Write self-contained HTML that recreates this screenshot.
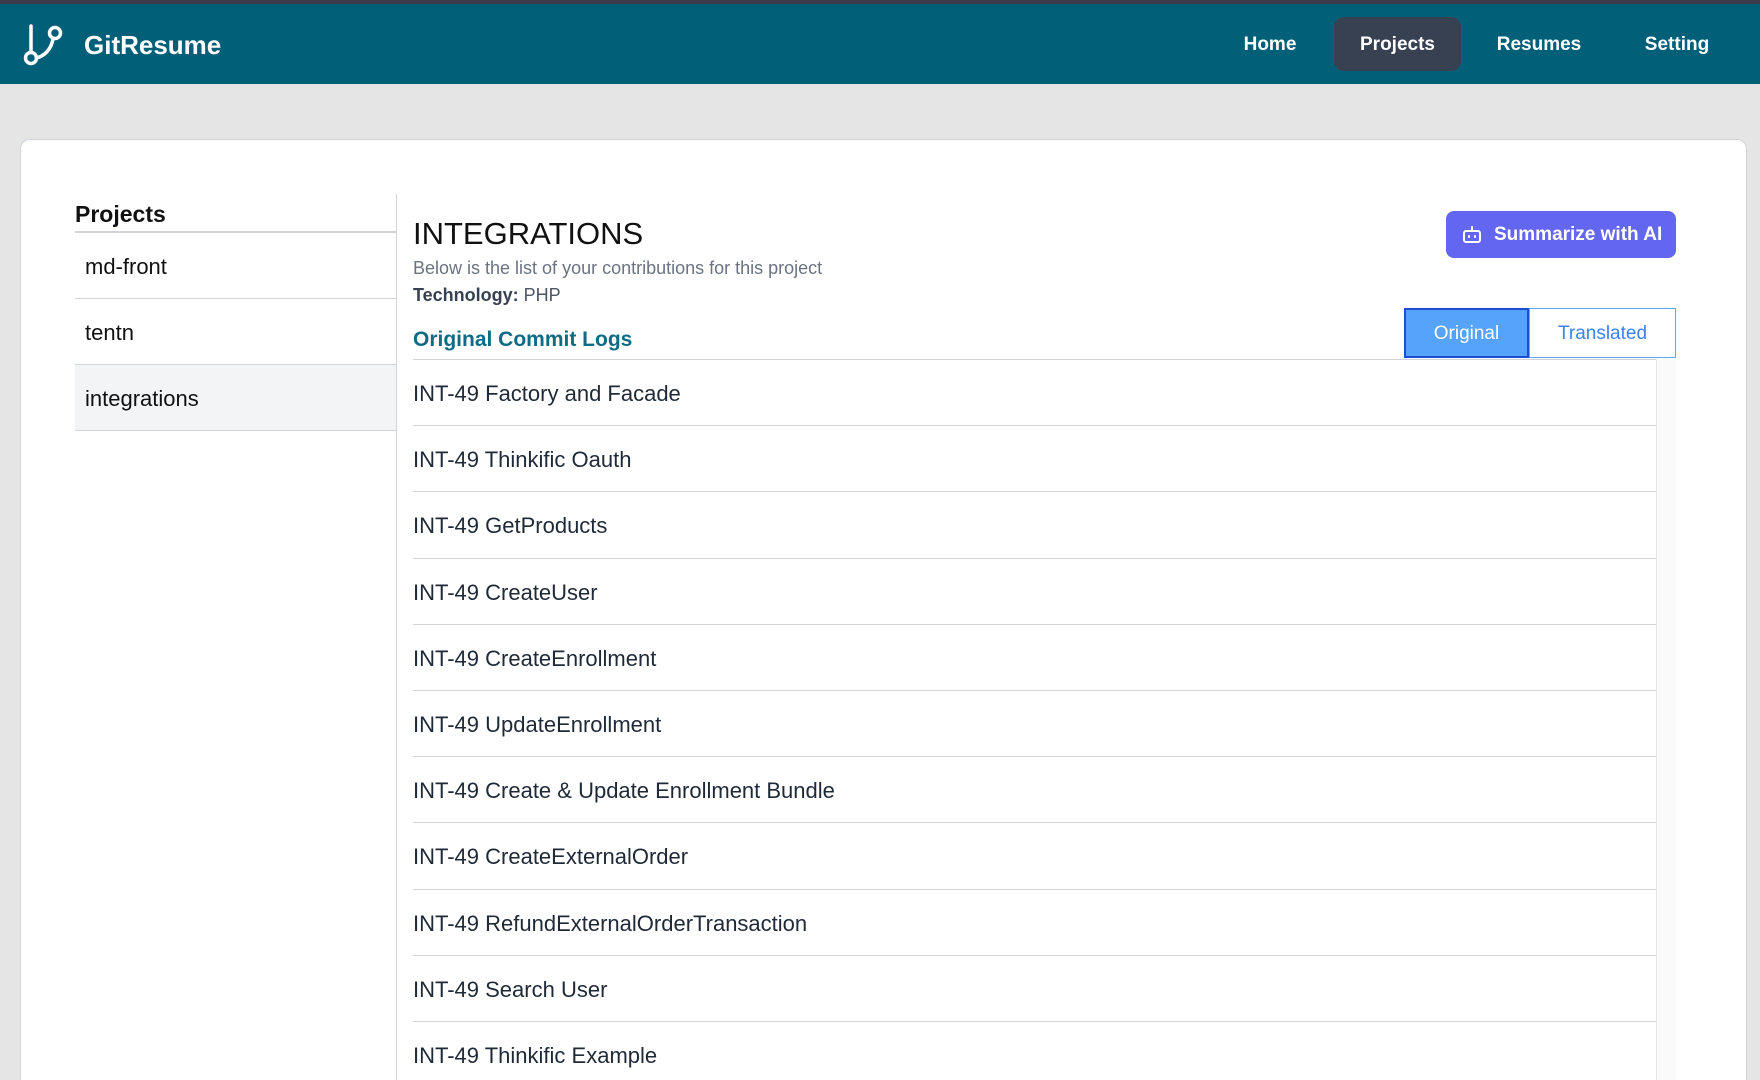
<!DOCTYPE html>
<html><head><meta charset="utf-8"><style>
*{box-sizing:border-box;margin:0;padding:0}
html,body{width:1760px;height:1080px;overflow:hidden}
body{background:#e5e5e5;font-family:"Liberation Sans",sans-serif;color:#1f2937}
#w{position:relative;width:1760px;height:1080px;overflow:hidden}
.a{position:absolute;white-space:nowrap}
.top{left:0;top:0;width:1760px;height:4px;background:#3d3a4b}
.hdr{left:0;top:4px;width:1760px;height:80px;background:#025f78}
.nav{color:#fff;font-size:19px;font-weight:bold;line-height:56px;top:17px;text-align:center}
.card{left:20px;top:139px;width:1727px;height:941px;background:#fff;border:1px solid #d1d5db;border-bottom:none;border-radius:10px 10px 0 0}
.side{left:75px;width:321px;height:66px;border-bottom:1px solid #d1d5db;font-size:22px;padding-left:10px;line-height:68px;color:#111}
.row{left:413px;width:1243px;height:66.2px;border-bottom:1px solid #d1d5db;font-size:22px;line-height:68px;color:#1f2937}
</style></head><body><div id="w">
<div class="a top"></div>
<div class="a hdr"></div>
<svg class="a" style="left:22px;top:24px" width="44" height="42" viewBox="0 0 44 42" fill="none" stroke="#fff" stroke-width="3.5" stroke-linecap="round">
<line x1="9" y1="2" x2="9" y2="28"/><circle cx="9" cy="34" r="5.5"/><circle cx="33" cy="9" r="5.5"/><path d="M31 15 C29 26 22 32 14.5 34"/></svg>
<div class="a" style="left:84px;top:28px;font-size:26px;font-weight:bold;color:#fff;line-height:34px">GitResume</div>
<div class="a nav" style="left:1230px;width:80px">Home</div>
<div class="a nav" style="left:1334px;width:127px;height:54px;background:#374151;border-radius:10px">Projects</div>
<div class="a nav" style="left:1489px;width:100px">Resumes</div>
<div class="a nav" style="left:1632px;width:90px">Setting</div>
<div class="a card"></div>
<div class="a" style="left:75px;top:199px;font-size:23px;font-weight:bold;color:#111;line-height:30px">Projects</div>
<div class="a" style="left:75px;top:231px;width:321px;height:2px;background:#d1d5db"></div>
<div class="a side" style="top:233px">md-front</div>
<div class="a side" style="top:299px">tentn</div>
<div class="a side" style="top:365px;background:#f3f4f6">integrations</div>
<div class="a" style="left:396px;top:194px;width:1px;height:886px;background:#d1d5db"></div>
<div class="a" style="left:413px;top:215px;font-size:31px;color:#111;line-height:38px">INTEGRATIONS</div>
<div class="a" style="left:413px;top:257px;font-size:18px;color:#6b7280;line-height:22px">Below is the list of your contributions for this project</div>
<div class="a" style="left:413px;top:284px;font-size:18px;color:#4b5563;line-height:22px"><b style="color:#374151">Technology:</b> PHP</div>
<div class="a" style="left:413px;top:327px;font-size:21px;font-weight:bold;color:#0e6b86;line-height:26px">Original Commit Logs</div>
<div class="a" style="left:1446px;top:211px;width:230px;height:47px;background:#6366f1;border-radius:8px;color:#fff;font-size:19px;font-weight:bold;line-height:48px;padding-left:48px">Summarize with AI</div>
<svg class="a" style="left:1462px;top:225px" width="20" height="20" viewBox="0 0 20 20" fill="none" stroke="#fff" stroke-width="2" stroke-linecap="round"><rect x="2" y="6" width="16" height="11" rx="2"/><line x1="10" y1="2" x2="10" y2="6"/><line x1="7" y1="11" x2="7" y2="12"/><line x1="13" y1="11" x2="13" y2="12"/></svg>
<div class="a" style="left:1404px;top:308px;width:125px;height:50px;background:#55a3fb;border:2px solid #1d4ed8;color:#fff;font-size:19px;text-align:center;line-height:48px">Original</div>
<div class="a" style="left:1529px;top:308px;width:147px;height:50px;background:#fff;border:1px solid #60a5fa;color:#3b82f6;font-size:19px;text-align:center;line-height:50px">Translated</div>
<div class="a" style="left:413px;top:359px;width:1243px;height:1px;background:#d1d5db"></div>
<div class="a" style="left:1656px;top:359px;width:20px;height:721px;background:#fafafa;border-left:1px solid #e5e7eb"></div>
<div class="a row" style="top:360px">INT-49 Factory and Facade</div>
<div class="a row" style="top:426.2px">INT-49 Thinkific Oauth</div>
<div class="a row" style="top:492.4px">INT-49 GetProducts</div>
<div class="a row" style="top:558.6px">INT-49 CreateUser</div>
<div class="a row" style="top:624.8px">INT-49 CreateEnrollment</div>
<div class="a row" style="top:691px">INT-49 UpdateEnrollment</div>
<div class="a row" style="top:757.2px">INT-49 Create &amp; Update Enrollment Bundle</div>
<div class="a row" style="top:823.4px">INT-49 CreateExternalOrder</div>
<div class="a row" style="top:889.6px">INT-49 RefundExternalOrderTransaction</div>
<div class="a row" style="top:955.8px">INT-49 Search User</div>
<div class="a row" style="top:1022px;height:58px;border-bottom:none">INT-49 Thinkific Example</div>
</div></body></html>
